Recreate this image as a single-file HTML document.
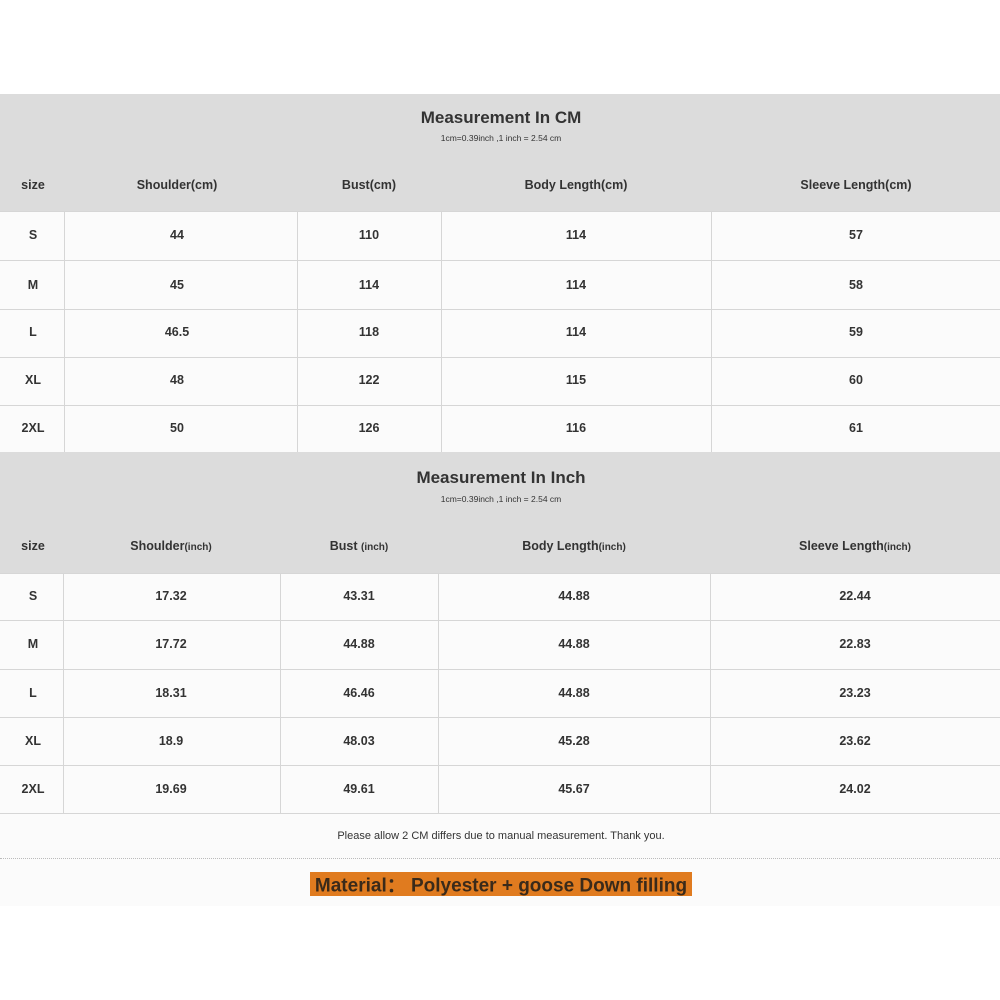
<!DOCTYPE html>
<html><head><style>
body{margin:0;width:1000px;height:1000px;background:#fff;position:relative;font-family:"Liberation Sans","DejaVu Sans",sans-serif;color:#333;overflow:hidden}
.a{position:absolute}
.g{background:#dcdcdc}
.t{position:absolute;transform:translate(-50%,-50%);white-space:nowrap;font-weight:bold;font-size:12.5px}
.h{position:absolute;width:1px;background:#d6d6d6}
.r{position:absolute;left:0;width:1000px;height:1px;background:#d6d6d6}
</style></head><body>
<div class="a g" style="left:0;top:94px;width:1000px;height:117px"></div>
<div class="a" style="left:0;top:211px;width:1000px;height:241px;background:#fbfbfb"></div>
<div class="a g" style="left:0;top:452px;width:1000px;height:121px"></div>
<div class="a" style="left:0;top:573px;width:1000px;height:333px;background:#fbfbfb"></div>
<div class="a" style="left:0;top:858px;width:1000px;border-top:1px dotted #bbb"></div>
<div class="a" style="left:310px;top:872px;width:382px;height:24px;background:#e07b1f"></div>

<div class="t" style="left:501px;top:118px;font-size:17px">Measurement In CM</div>
<div class="t" style="left:501px;top:138px;font-size:8.5px;font-weight:normal">1cm=0.39inch ,1 inch = 2.54 cm</div>
<div class="t" style="left:501px;top:478px;font-size:17px">Measurement In Inch</div>
<div class="t" style="left:501px;top:499px;font-size:8.5px;font-weight:normal">1cm=0.39inch ,1 inch = 2.54 cm</div>
<div class="t" style="left:501px;top:836px;font-size:11px;font-weight:normal">Please allow 2 CM differs due to manual measurement. Thank you.</div>
<div class="t" style="left:501px;top:884px;font-size:19px;color:#3a2a1a">Material：&nbsp;Polyester + goose Down filling</div>

<div class="r" style="top:211px"></div><div class="r" style="top:260px"></div><div class="r" style="top:309px"></div><div class="r" style="top:357px"></div><div class="r" style="top:405px"></div>
<div class="r" style="top:573px"></div><div class="r" style="top:620px"></div><div class="r" style="top:669px"></div><div class="r" style="top:717px"></div><div class="r" style="top:765px"></div><div class="r" style="top:813px"></div>
<div class="h" style="left:64px;top:211px;height:241px"></div><div class="h" style="left:297px;top:211px;height:241px"></div><div class="h" style="left:441px;top:211px;height:241px"></div><div class="h" style="left:711px;top:211px;height:241px"></div>
<div class="h" style="left:63px;top:573px;height:240px"></div><div class="h" style="left:280px;top:573px;height:240px"></div><div class="h" style="left:438px;top:573px;height:240px"></div><div class="h" style="left:710px;top:573px;height:240px"></div>

<script>
function put(y,xs,vals){vals.forEach((v,i)=>{var d=document.createElement('div');d.className='t';d.style.left=xs[i]+'px';d.style.top=y+'px';d.innerHTML=v;document.body.appendChild(d);});}
var x1=[33,177,369,576,856];
put(185,x1,['size','Shoulder(cm)','Bust(cm)','Body Length(cm)','Sleeve Length(cm)']);
[[235,'S',44,110,114,57],[285,'M',45,114,114,58],[332,'L',46.5,118,114,59],[380,'XL',48,122,115,60],[428,'2XL',50,126,116,61]].forEach(r=>put(r[0],x1,r.slice(1)));
var x2=[33,171,359,574,855];var s='<span style="font-size:10px">(inch)</span>';
put(546,x2,['size','Shoulder'+s,'Bust '+s,'Body Length'+s,'Sleeve Length'+s]);
[[596,'S','17.32','43.31','44.88','22.44'],[644,'M','17.72','44.88','44.88','22.83'],[693,'L','18.31','46.46','44.88','23.23'],[741,'XL','18.9','48.03','45.28','23.62'],[789,'2XL','19.69','49.61','45.67','24.02']].forEach(r=>put(r[0],x2,r.slice(1)));
</script>
</body></html>
